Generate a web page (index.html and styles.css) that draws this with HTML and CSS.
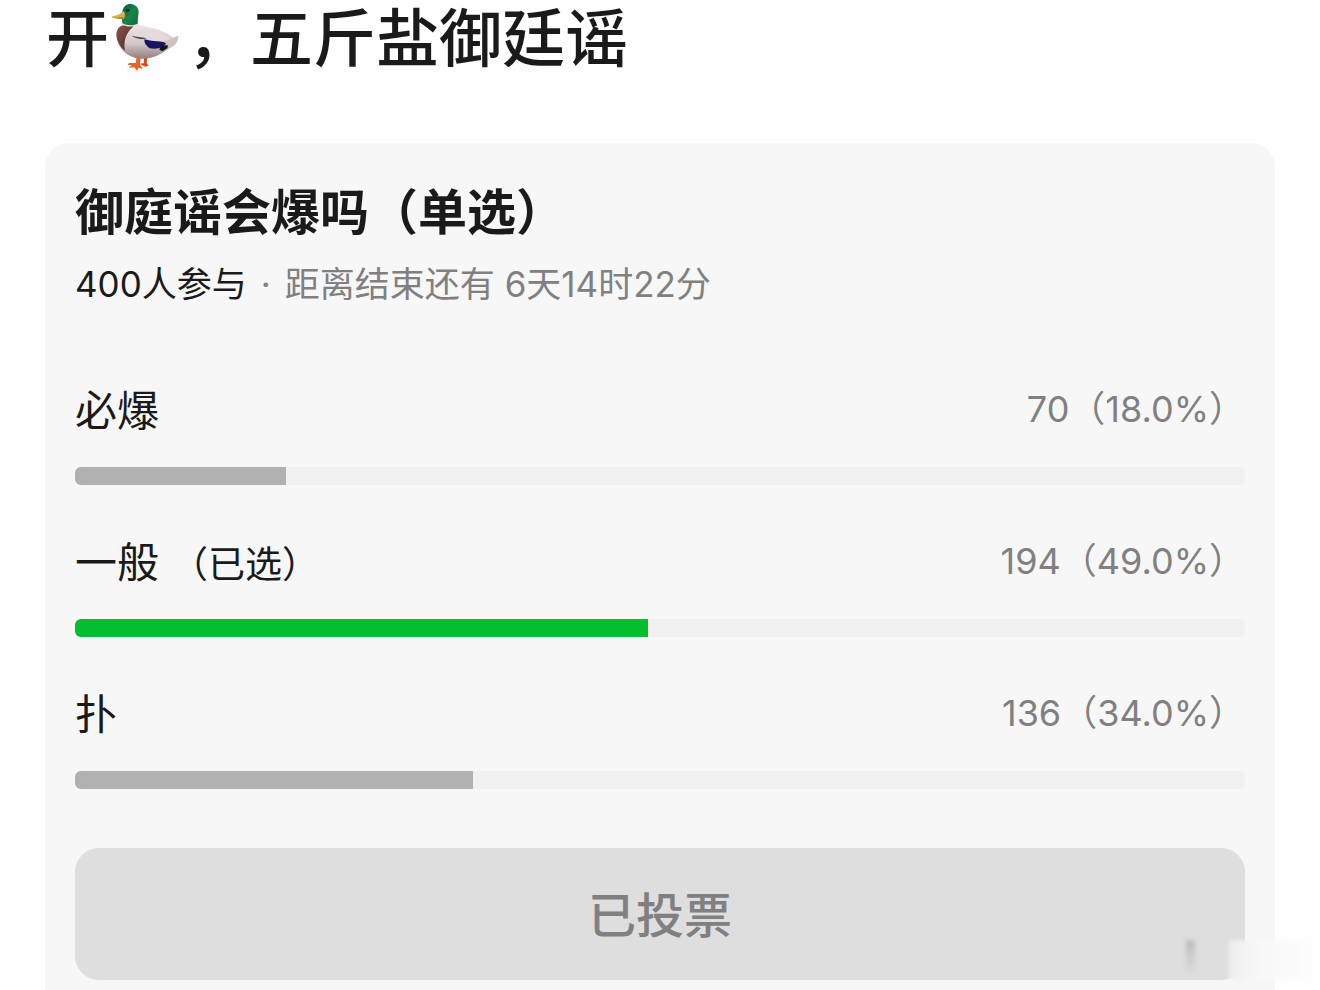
FILE: index.html
```html
<!DOCTYPE html>
<html lang="zh-CN">
<head>
  <meta charset="UTF-8">
  <meta name="viewport" content="width=device-width, initial-scale=1.0">
  <title>御庭谣会爆吗</title>
  <link rel="stylesheet" href="styles.css">
</head>
<body>
<h1 class="post-title">
  <span>开</span>
  <svg class="duck" viewBox="0 0 210 210" role="img" aria-label="鸭">
    <defs>
      <linearGradient id="head" x1="0" y1="0" x2="1" y2="1">
        <stop offset="0" stop-color="#07533a"/>
        <stop offset=".5" stop-color="#17864b"/>
        <stop offset="1" stop-color="#0b6b35"/>
      </linearGradient>
      <linearGradient id="body" x1="0" y1="0" x2="0" y2="1">
        <stop offset="0" stop-color="#eee6e6"/>
        <stop offset=".55" stop-color="#d5c8c8"/>
        <stop offset="1" stop-color="#91807e"/>
      </linearGradient>
      <linearGradient id="chest" x1="0" y1="0" x2="1" y2="1">
        <stop offset="0" stop-color="#8b5550"/>
        <stop offset="1" stop-color="#4c2525"/>
      </linearGradient>
    </defs>
    <path d="M84 156L80 180L60 180L56 185L68 187L59 195L76 193L84 203L89 195L102 197L93 185L96 156Z" fill="#e5662a"/>
    <path d="M106 154L104 181L92 182L100 187L109 191L119 188L113 181L116 153Z" fill="#cf4c20"/>
    <path d="M49 66C65 59 91 65 115 71C151 78 173 90 190 102C198 104 204 96 208 100C209 116 199 130 178 137C160 151 137 165 106 167C68 168 38 150 27 119C23 95 27 75 49 66Z" fill="url(#body)"/>
    <path d="M43 66C56 60 66 66 74 70C54 86 42 111 48 143C31 131 22 110 22 93C23 78 32 70 43 66Z" fill="url(#chest)"/>
    <path d="M69 92C88 79 118 78 145 87C169 96 185 105 191 121C162 120 132 116 108 105C91 105 77 101 69 92Z" fill="#e4dada"/>
    <path d="M68 98C82 103 99 100 113 106C104 111 79 108 68 98Z" fill="#604b49"/>
    <path d="M106 109C122 114 145 115 174 118C164 134 146 140 122 136C111 129 105 119 106 109Z" fill="#171462"/>
    <path d="M155 128L183 125L176 135L160 145L151 140Z" fill="#18171c"/>
    <path d="M157 114C180 115 195 103 207 100C206 119 193 132 175 134C180 125 171 120 157 114Z" fill="#cfc1c1"/>
    <path d="M40 62C38 43 37 19 48 9C59 -1 80 2 87 17C92 30 84 43 87 62C76 70 54 70 40 62Z" fill="url(#head)"/>
    <path d="M39 61C54 68 73 70 87 61L86 66C70 73 54 71 38 66Z" fill="#e7e5dc"/>
    <path d="M43 24C34 35 20 38 8 40C9 46 20 47 29 46L43 49C49 43 50 29 43 24Z" fill="#deb24a"/>
    <path d="M10 42C22 45 33 41 44 43L42 48L27 47Z" fill="#a87624"/>
    <ellipse cx="56" cy="22" rx="5" ry="4" fill="#071b18"/>
    <circle cx="55" cy="21" r="1" fill="#d6e8de"/>
  </svg>
  <span>，五斤盐御廷谣</span>
</h1>

<main class="vote">
  <h2 class="vote-title">御庭谣会爆吗（单选）</h2>
  <p class="vote-info"><span class="joined">400人参与</span><span class="dot">·</span>距离结束还有 6天14时22分</p>

  <ul class="options">
    <li class="option">
      <div class="option-text">
        <span class="name" id="option1">必爆</span>
        <span class="count">70（18.0%）</span>
      </div>
      <div class="bar" role="progressbar" aria-labelledby="option1" aria-valuenow="18">
        <div class="fill" style="width: 18%"></div>
      </div>
    </li>
    <li class="option selected">
      <div class="option-text">
        <span class="name" id="option2">一般<span class="mark">（已选）</span></span>
        <span class="count">194（49.0%）</span>
      </div>
      <div class="bar" role="progressbar" aria-labelledby="option2" aria-valuenow="49">
        <div class="fill" style="width: 49%"></div>
      </div>
    </li>
    <li class="option">
      <div class="option-text">
        <span class="name" id="option3">扑</span>
        <span class="count">136（34.0%）</span>
      </div>
      <div class="bar" role="progressbar" aria-labelledby="option3" aria-valuenow="34">
        <div class="fill" style="width: 34%"></div>
      </div>
    </li>
  </ul>

  <button class="vote-btn" type="button">已投票</button>
  <div class="smudge"></div>
</main>
</body>
</html>
```
FILE: styles.css
```css
* {
    box-sizing: border-box;
}

body {
    margin: 0;
    padding: 0 45px;
    background-color: #fefefe;
    color: #1a1a1a;
    font-family: Inter, "Noto Sans CJK SC", sans-serif;
}

.post-title {
    display: flex;
    align-items: center;
    height: 76px;
    margin: 0 0 67px;
    padding-left: 1px;
    font-size: 63px;
    font-weight: 500;
    line-height: 76px;
}

.duck {
    width: 70px;
    height: 70px;
    margin-right: 8px;
}

.vote {
    position: relative;
    padding: 34px 30px 10px;
    border-radius: 24px 24px 0 0;
    background-color: #f7f7f7;
}

.vote-title {
    margin: 0;
    font-size: 49px;
    font-weight: 700;
    line-height: 72px;
}

.vote-info {
    margin: 10px 0 72px;
    color: #808080;
    font-size: 35px;
    line-height: 50px;
}

.joined {
    color: #1a1a1a;
}

.dot {
    display: inline-block;
    width: 38px;
    text-align: center;
}

.options {
    display: flex;
    flex-direction: column;
    gap: 48px;
    margin: 0 0 59px;
    padding: 0;
    list-style: none;
}

.option-text {
    display: flex;
    justify-content: space-between;
    align-items: flex-start;
    margin-bottom: 26px;
    line-height: 60px;
}

.name {
    font-size: 42px;
}

.mark {
    margin-left: 12px;
    font-size: 37px;
    line-height: 1;
}

.count {
    color: #808080;
    font-size: 36px;
    line-height: 56px;
}

.bar {
    height: 18px;
    border-radius: 6px;
    background-color: #f1f1f1;
    overflow: hidden;
}

.fill {
    height: 100%;
    background-color: #b1b1b1;
}

.selected .fill {
    background-color: #05bd31;
}

.vote-btn {
    display: block;
    width: 100%;
    height: 132px;
    padding: 0 0 4px;
    border: none;
    border-radius: 24px;
    background-color: #dedede;
    color: #808080;
    font-family: inherit;
    font-size: 48px;
    font-weight: 500;
}

/* 右下角的模糊痕迹 */
.smudge {
    position: absolute;
    right: -40px;
    bottom: 10px;
    width: 86px;
    height: 40px;
    background: linear-gradient(90deg, #ededed, #f7f7f7 30%, #fdfdfd);
    filter: blur(2px);
}

.smudge::before {
    content: "";
    position: absolute;
    left: -43px;
    width: 9px;
    height: 36px;
    background: linear-gradient(#bcbcbc, #dedede);
}
```
